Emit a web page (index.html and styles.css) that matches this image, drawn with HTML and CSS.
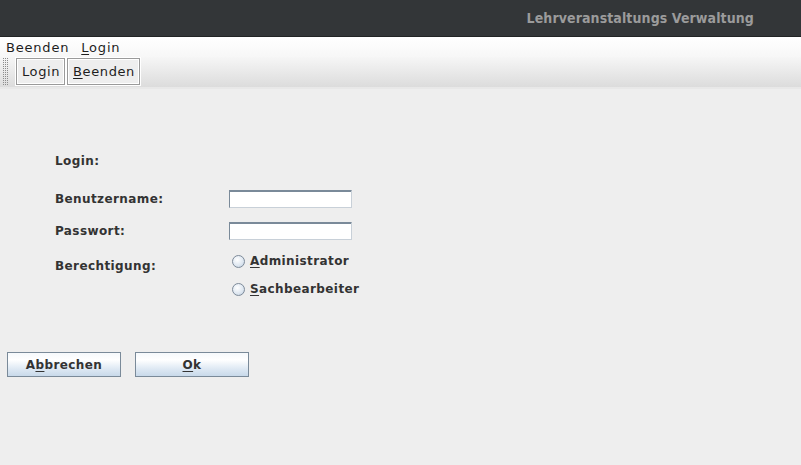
FILE: index.html
```html
<!DOCTYPE html>
<html lang="de">
<head>
<meta charset="utf-8">
<link rel="stylesheet" href="styles.css">
</head>
<body>
<div class="window">
  <div class="titlebar"><span class="title">Lehrveranstaltungs Verwaltung</span></div>
  <div class="menubar">
    <span class="menu">Beenden</span>
    <span class="menu"><u>L</u>ogin</span>
  </div>
  <div class="toolbar">
    <div class="grip"></div>
    <div class="tbtn">Login</div>
    <div class="tbtn"><u>B</u>eenden</div>
  </div>
  <div class="content">
    <div class="form">
      <div class="lbl heading">Login:</div>
      <div class="row">
        <div class="lbl">Benutzername:</div>
        <div class="field"></div>
      </div>
      <div class="row r2">
        <div class="lbl">Passwort:</div>
        <div class="field"></div>
      </div>
      <div class="row r3">
        <div class="lbl berech">Berechtigung:</div>
        <div class="radios">
          <div class="radio"><span class="dot"></span><span><u>A</u>dministrator</span></div>
          <div class="radio"><span class="dot"></span><span><u>S</u>achbearbeiter</span></div>
        </div>
      </div>
    </div>
    <div class="buttons">
      <div class="btn">A<u>b</u>brechen</div>
      <div class="btn"><u>O</u>k</div>
    </div>
  </div>
</div>
</body>
</html>
```
FILE: styles.css
```css
* { box-sizing: border-box; }
html, body { margin: 0; padding: 0; }
body { width: 801px; height: 465px; overflow: hidden; background: #eeeeee; font-family: "DejaVu Sans", sans-serif; }
.window { display: flex; flex-direction: column; height: 465px; }
.titlebar {
  height: 37px; background: #333638; border-bottom: 1px solid #222425;
  display: flex; justify-content: flex-end; align-items: center; padding-right: 47px;
}
.title { font-family: "DejaVu Sans Condensed", "DejaVu Sans", sans-serif; font-weight: bold; font-size: 14px; letter-spacing: 0.1px; color: #9b9b9b; padding-bottom: 1px; }
.menubar {
  height: 20px; background: linear-gradient(#ffffff, #f7f7f7);
  display: flex; align-items: center; padding-left: 6px; gap: 12px;
  font-family: "DejaVu Sans", sans-serif; font-size: 13px; letter-spacing: 0.8px; color: #1e1e1e;
}
.toolbar {
  height: 32px; background: linear-gradient(#f6f6f6, #dcdcdc);
  display: flex; align-items: flex-start; padding-top: 1px; padding-left: 2px;
  border-bottom: 2px solid #e8e8e8; box-shadow: 0 1px 0 #cfcfcf;
}
.grip {
  width: 7px; height: 27px; margin-top: 0; margin-right: 7px;
  background: conic-gradient(at 1px 1px, #8c8c8c 25%, transparent 0) 0 0 / 2px 2px;
}
.tbtn {
  height: 27px; border: 1px solid #9a9a9a; box-shadow: inset 0 0 0 1px #ffffff, 0 0 0 1px #fff;
  background: #eeeeee; padding: 0 4px 0 5px; margin-right: 2px;
  display: flex; align-items: center;
  font-family: "DejaVu Sans", sans-serif; font-size: 13px; letter-spacing: 0.6px; color: #1e1e1e;
}
.content { flex: 1; background: #eeeeee; padding: 62px 0 0 0; color: #333; font-size: 12px; letter-spacing: 0.4px; font-weight: bold; }
.form { padding-left: 55px; }
.lbl { width: 174px; }
.heading { height: 20px; line-height: 20px; margin-bottom: 19px; }
.row { display: flex; align-items: center; height: 18px; }
.r2 { margin-top: 14px; }
.r3 { margin-top: 13px; align-items: flex-start; height: auto; }
.berech { margin-top: 6px; }
.field { width: 123px; height: 18px; background: #fff; border: 1px solid #7a8a99; border-right-color: #c8d0d8; border-bottom-color: #c8d0d8; box-shadow: inset 0 1px 0 #7a8a99; }
.radios { display: flex; flex-direction: column; gap: 12px; padding-left: 3px; }
.radio { display: flex; align-items: center; height: 16px; gap: 5px; }
.dot {
  width: 13px; height: 13px; border-radius: 50%;
  border: 1px solid #7d8a99;
  background: radial-gradient(circle at 40% 35%, #ffffff 0%, #dde6f0 60%, #b8c8d8 100%);
}
.buttons { display: flex; gap: 14px; padding-left: 7px; margin-top: 55px; }
.btn {
  width: 114px; height: 25px; border: 1px solid #7a8a99;
  background: linear-gradient(#f6f9fc 0%, #ffffff 30%, #dde8f3 70%, #c8d9ea 100%);
  display: flex; align-items: center; justify-content: center; color: #333;
}
u { text-decoration-thickness: 1px; text-underline-offset: 2px; }
```
